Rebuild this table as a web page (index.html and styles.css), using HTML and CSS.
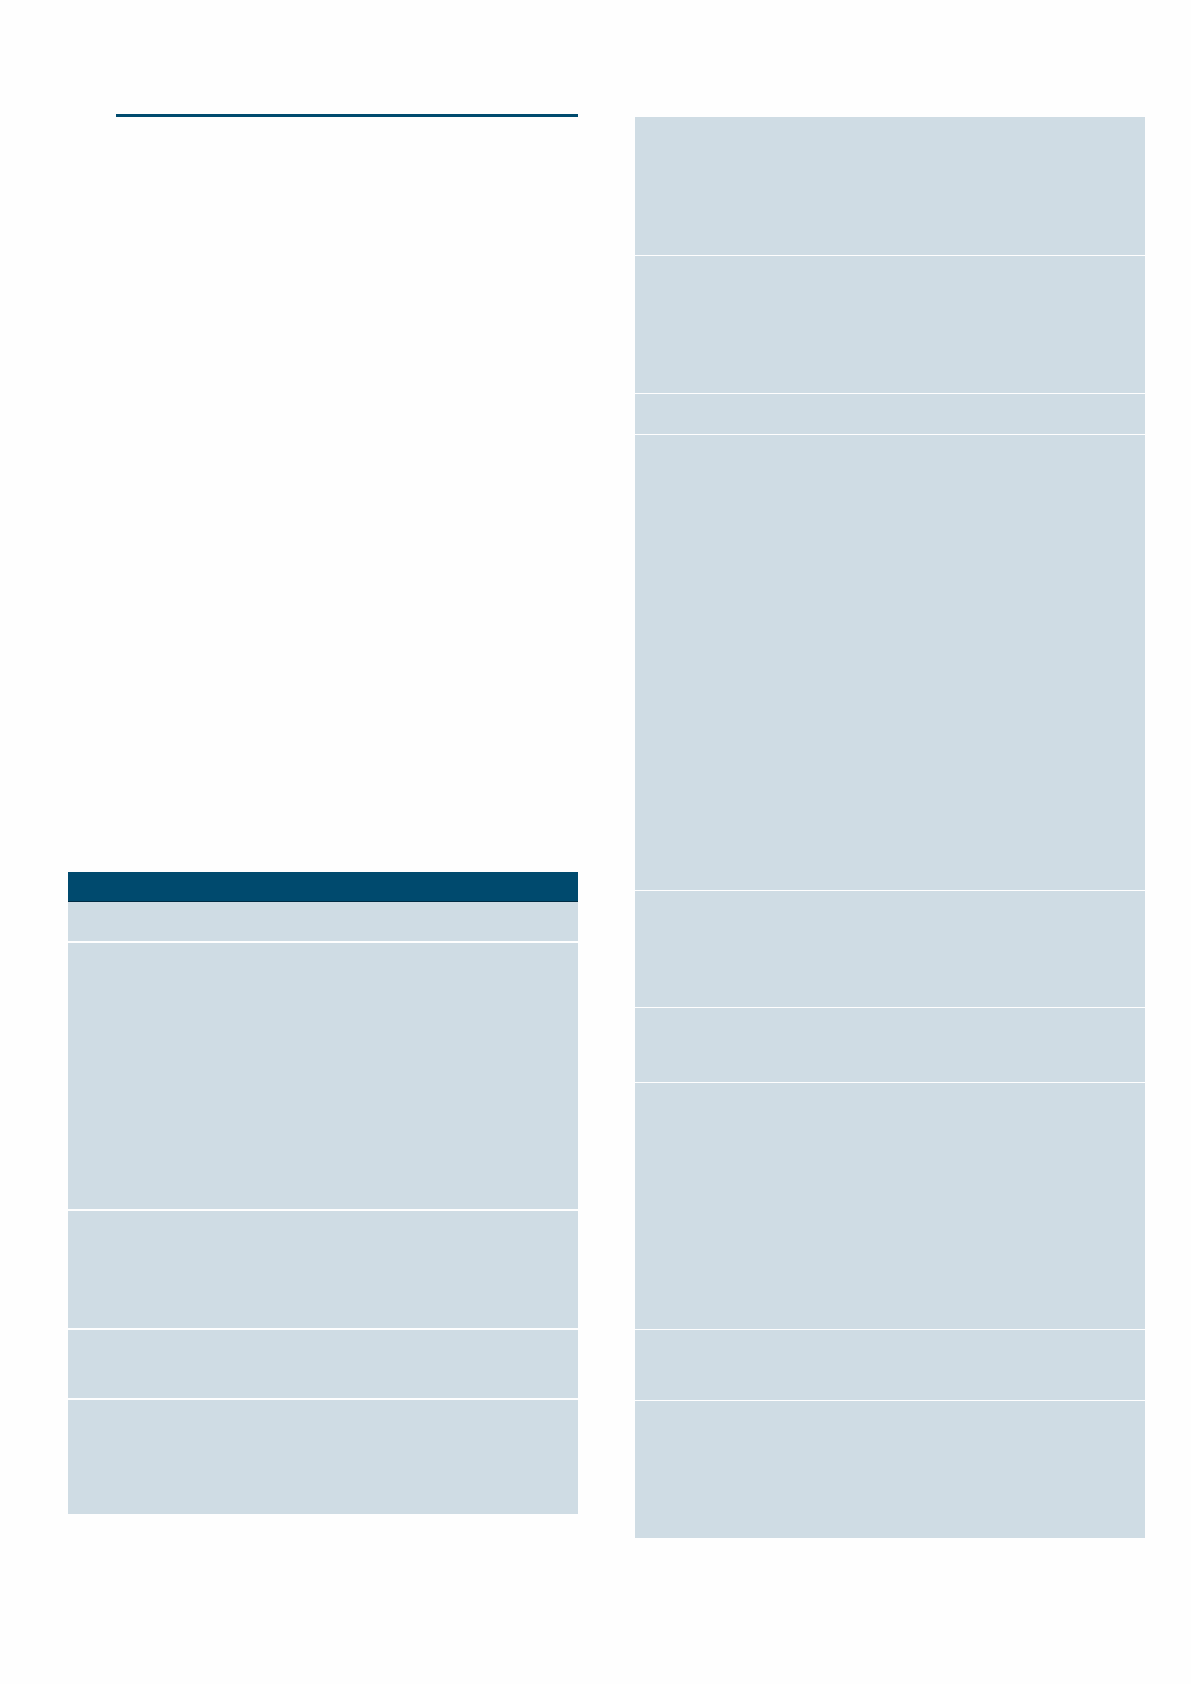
FILE: index.html
```html
<!DOCTYPE html>
<html lang="en">
<head>
  <meta charset="UTF-8">
  <title>Page</title>
  <link rel="stylesheet" href="styles.css">
</head>
<body>
  <div class="page">
    <div class="col col-left">
      <div class="rule"></div>

      <div class="table table-left">
        <div class="head"></div>
        <div class="row h39"></div>
        <div class="row h266"></div>
        <div class="row h117"></div>
        <div class="row h68"></div>
        <div class="row h114"></div>
      </div>
    </div>

    <div class="col col-right">
      <div class="table table-right">
        <div class="row h138"></div>
        <div class="row h137"></div>
        <div class="row h40"></div>
        <div class="row h455"></div>
        <div class="row h116"></div>
        <div class="row h74"></div>
        <div class="row h246"></div>
        <div class="row h70"></div>
        <div class="row h137"></div>
      </div>
    </div>
  </div>
</body>
</html>
```

FILE: styles.css
```css
body {
  margin: 0;
  background: #fefefe;
  font-family: "Liberation Sans", Arial, sans-serif;
}

.page {
  display: flex;
  gap: 57px;
  padding-left: 68px;
  min-height: 1684px;
}

.col {
  width: 510px;
  display: flex;
  flex-direction: column;
}

.col-left {
  padding-top: 114px;
}

.col-right {
  padding-top: 117px;
}

.rule {
  height: 3px;
  margin-left: 48px;
  background: #004b6e;
}

.table {
  display: flex;
  flex-direction: column;
}

.table-left {
  margin-top: 755px;
  gap: 2px;
}

.table-right {
  gap: 1px;
}

.head {
  height: 29px;
  background: #004a6e;
  border-bottom: 1px solid #002c44;
  margin-bottom: -2px; /* header sits right on the first row */
}

.row {
  background: #cfdce4;
}

.h39 { height: 39px; }
.h40 { height: 40px; }
.h68 { height: 68px; }
.h70 { height: 70px; }
.h74 { height: 74px; }
.h114 { height: 114px; }
.h116 { height: 116px; }
.h117 { height: 117px; }
.h137 { height: 137px; }
.h138 { height: 138px; }
.h246 { height: 246px; }
.h266 { height: 266px; }
.h455 { height: 455px; }
```
